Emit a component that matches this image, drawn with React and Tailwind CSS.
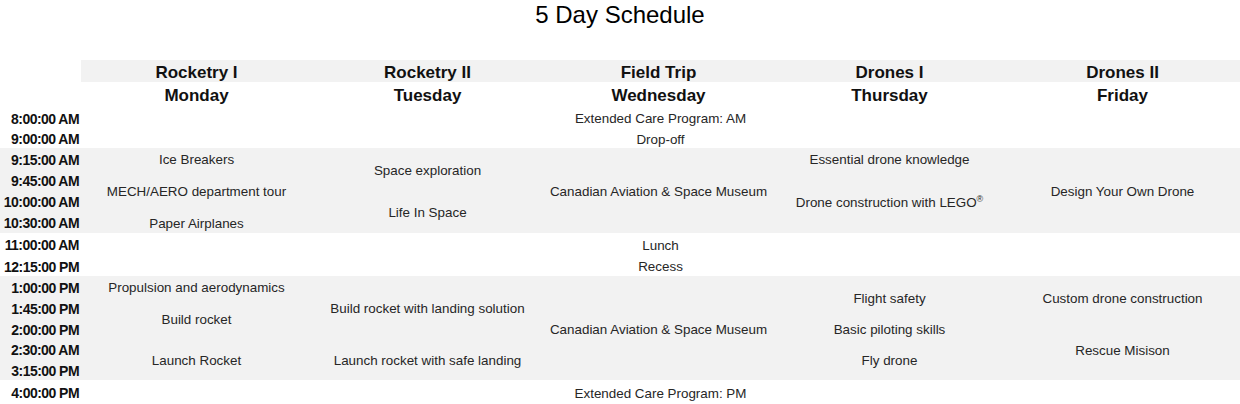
import React from "react";

const times = [
  ["8:00:00 AM", "row-start-3"],
  ["9:00:00 AM", "row-start-4"],
  ["9:15:00 AM", "row-start-5"],
  ["9:45:00 AM", "row-start-6"],
  ["10:00:00 AM", "row-start-7"],
  ["10:30:00 AM", "row-start-8"],
  ["11:00:00 AM", "row-start-9"],
  ["12:15:00 PM", "row-start-10"],
  ["1:00:00 PM", "row-start-11"],
  ["1:45:00 PM", "row-start-12"],
  ["2:00:00 PM", "row-start-13"],
  ["2:30:00 AM", "row-start-14"],
  ["3:15:00 PM", "row-start-15"],
  ["4:00:00 PM", "row-start-16"],
];

const days = [
  ["Rocketry I", "Monday", "col-start-2"],
  ["Rocketry II", "Tuesday", "col-start-3"],
  ["Field Trip", "Wednesday", "col-start-4"],
  ["Drones I", "Thursday", "col-start-5"],
  ["Drones II", "Friday", "col-start-6"],
];

const events = [
  ["Extended Care Program: AM", "row-start-3 col-start-2 col-span-5"],
  ["Drop-off", "row-start-4 col-start-2 col-span-5"],

  ["Ice Breakers", "row-start-5 col-start-2"],
  ["MECH/AERO department tour", "row-start-6 row-span-2 col-start-2"],
  ["Paper Airplanes", "row-start-8 col-start-2"],
  ["Space exploration", "row-start-5 row-span-2 col-start-3"],
  ["Life In Space", "row-start-7 row-span-2 col-start-3"],
  ["Canadian Aviation & Space Museum", "row-start-5 row-span-4 col-start-4"],
  ["Essential drone knowledge", "row-start-5 col-start-5"],
  ["lego", "row-start-6 row-span-3 col-start-5"],
  ["Design Your Own Drone", "row-start-5 row-span-4 col-start-6"],

  ["Lunch", "row-start-9 col-start-2 col-span-5"],
  ["Recess", "row-start-10 col-start-2 col-span-5"],

  ["Propulsion and aerodynamics", "row-start-11 col-start-2"],
  ["Build rocket", "row-start-12 row-span-2 col-start-2"],
  ["Launch Rocket", "row-start-14 row-span-2 col-start-2"],
  ["Build rocket with landing solution", "row-start-11 row-span-3 col-start-3"],
  ["Launch rocket with safe landing", "row-start-14 row-span-2 col-start-3"],
  ["Canadian Aviation & Space Museum", "row-start-11 row-span-5 col-start-4"],
  ["Flight safety", "row-start-11 row-span-2 col-start-5"],
  ["Basic piloting skills", "row-start-13 col-start-5"],
  ["Fly drone", "row-start-14 row-span-2 col-start-5"],
  ["Custom drone construction", "row-start-11 row-span-2 col-start-6"],
  ["Rescue Misison", "row-start-13 row-span-3 col-start-6"],

  ["Extended Care Program: PM", "row-start-16 col-start-2 col-span-5"],
];

export default function App() {
  return (
    <div className="w-[1240px] h-[404px] overflow-hidden bg-white font-['Liberation_Sans',Arial,sans-serif]">
      <div className="h-[60px] pt-[2px] text-center text-[24px] leading-[26px] text-black">
        5 Day Schedule
      </div>

      <div className="grid grid-cols-[81px_231px_231px_231px_231px_1fr] grid-rows-[22px_25px_21px_20px_21px_21px_21px_22px_22px_21px_21px_21px_21px_20px_21px_24px]">
        {/* shaded bands */}
        <div className="row-start-1 col-start-2 col-span-5 bg-[#f2f2f2]" />
        <div className="row-start-5 row-span-4 col-start-1 col-span-6 bg-[#f2f2f2]" />
        <div className="row-start-11 row-span-5 col-start-1 col-span-6 bg-[#f2f2f2]" />

        {days.map(([course, day, col]) => (
          <React.Fragment key={day}>
            <div
              className={`${col} row-start-1 flex items-center justify-center pt-[3px] text-[17px] font-bold leading-[20px] text-[#111]`}
            >
              {course}
            </div>
            <div
              className={`${col} row-start-2 flex items-center justify-center pt-[2px] text-[17px] font-bold leading-[20px] text-[#111]`}
            >
              {day}
            </div>
          </React.Fragment>
        ))}

        {times.map(([t, row]) => (
          <div
            key={t}
            className={`${row} col-start-1 flex items-center justify-end pt-[2px] pr-[2px] text-[14px] font-bold tracking-[-0.55px] leading-[16px] text-[#111] whitespace-nowrap`}
          >
            {t}
          </div>
        ))}

        {events.map(([label, pos], i) => (
          <div
            key={i}
            className={`${pos} flex items-center justify-center pt-[3px] text-center text-[13.4px] leading-[16px] text-[#262626] whitespace-nowrap`}
          >
            {label === "lego" ? (
              <span>
                Drone construction with LEGO
                <sup className="text-[9px]">®</sup>
              </span>
            ) : (
              label
            )}
          </div>
        ))}
      </div>
    </div>
  );
}
